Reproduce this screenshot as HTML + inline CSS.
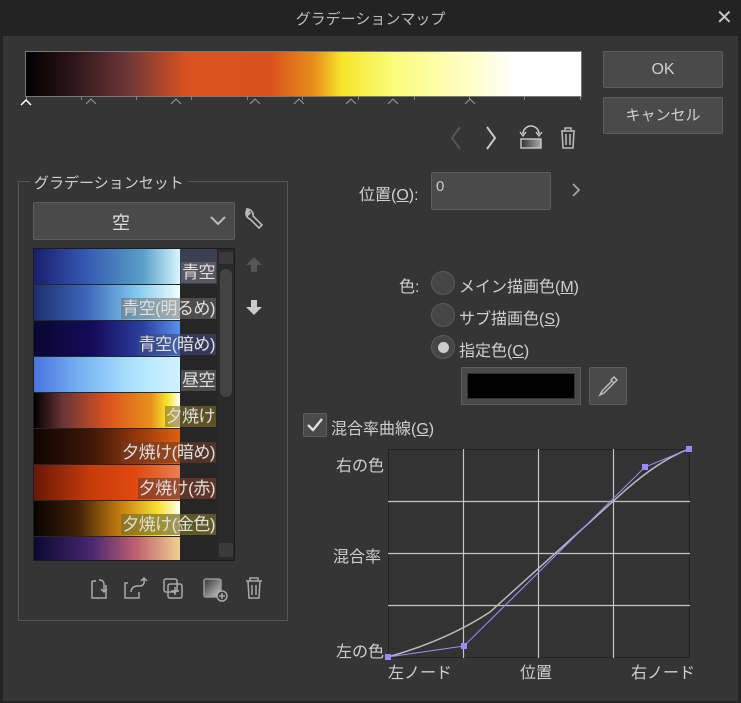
<!DOCTYPE html>
<html><head><meta charset="utf-8"><style>
*{box-sizing:border-box;margin:0;padding:0}
body{width:741px;height:703px;background:#232323;font-family:"Liberation Sans","Noto Sans CJK JP",sans-serif;color:#c8c8c8;position:relative;overflow:hidden}
.a{position:absolute}
.btn{position:absolute;background:#4a4a4a;border:1px solid #5e5e5e;border-radius:2px;color:#cfcfcf;font-size:16px;text-align:center}
.row{position:absolute;left:0;width:183px;height:35px}
.row .g{position:absolute;left:0;top:0;width:146px;height:35px}
.row .l{position:absolute;right:1px;bottom:1px;font-size:17px;color:#e0e0e0;padding:0 1px;background:rgba(110,110,110,.55);line-height:21px;letter-spacing:-0.5px}
.lbl{position:absolute;font-size:16px;color:#cfcfcf}
.radio{position:absolute;width:24px;height:24px;border-radius:50%;background:#464646;border:1px solid #5a5a5a}
</style></head><body>
<div class="a" style="left:0;top:0;width:741px;height:36px;background:#232323"></div>
<div class="a" style="left:0;top:8px;width:741px;text-align:center;font-size:15px;color:#bdbdbd">グラデーションマップ</div>
<div class="a" style="left:716px;top:5px;font-size:20px;color:#c8c8c8">✕</div>
<div class="a" style="left:3px;top:36px;width:735px;height:665px;background:#353535"></div>

<div class="a" style="left:25px;top:51px;width:557px;height:46px;border:1px solid #777;background:linear-gradient(to right,#000 0%,#2a1418 8%,#6b3538 18%,#d95220 29%,#d9521e 44%,#e8901a 52%,#f6e62a 57%,#fafc7a 66%,#ffffc8 80%,#fff 88%,#fff 100%)"></div>
<svg class="a" style="left:0;top:94px" width="600" height="14">
<g stroke="#888" stroke-width="1" fill="none">
<line x1="26.5" y1="2" x2="26.5" y2="6"/><line x1="81.5" y1="2" x2="81.5" y2="6"/><line x1="136.5" y1="2" x2="136.5" y2="6"/><line x1="191.5" y1="2" x2="191.5" y2="6"/><line x1="247.5" y1="2" x2="247.5" y2="6"/><line x1="302.5" y1="2" x2="302.5" y2="6"/><line x1="358.5" y1="2" x2="358.5" y2="6"/><line x1="414.5" y1="2" x2="414.5" y2="6"/><line x1="469.5" y1="2" x2="469.5" y2="6"/><line x1="524.5" y1="2" x2="524.5" y2="6"/><line x1="580.5" y1="2" x2="580.5" y2="6"/>
<path d="M86 10l5-5 5 5M171 10l5-5 5 5M250 10l5-5 5 5M294 10l5-5 5 5M346 10l5-5 5 5M388 10l5-5 5 5M465 10l5-5 5 5" stroke="#9a9a9a"/>
<path d="M21 11l5-5 5 5" stroke="#fff" stroke-width="1.5"/>
</g></svg>

<div class="btn" style="left:603px;top:51px;width:120px;height:37px;line-height:35px">OK</div>
<div class="btn" style="left:603px;top:97px;width:120px;height:37px;line-height:35px;font-size:15px">キャンセル</div>

<svg class="a" style="left:440px;top:122px" width="150" height="32" fill="none" stroke-width="2">
<path d="M20 5l-8 11 8 11" stroke="#555"/>
<path d="M47 5l8 11-8 11" stroke="#c8c8c8"/>
<path d="M83 12a8 8 0 0 1 16 0" stroke="#c8c8c8" stroke-width="1.6"/>
<path d="M80 10l3 4 3-4M96 10l3 4 3-4" stroke="#c8c8c8" stroke-width="1.4"/>
<rect x="81" y="17" width="20" height="9" fill="url(#gg)" stroke="#c8c8c8" stroke-width="1.4"/>
<defs><linearGradient id="gg"><stop offset="0" stop-color="#333"/><stop offset="1" stop-color="#aaa"/></linearGradient></defs>
<path d="M121 9h14M125 9V6h6v3M122 9l1 17h10l1-17M126 12v11M130 12v11" stroke="#bbb" stroke-width="1.5"/>
</svg>

<div class="a" style="left:18px;top:181px;width:270px;height:440px;border:1px solid #555"></div>
<div class="a" style="left:30px;top:172px;padding:0 4px;background:#353535;font-size:15px;color:#cfcfcf">グラデーションセット</div>
<div class="a" style="left:33px;top:202px;width:202px;height:38px;background:#4a4a4a;border:1px solid #5e5e5e;border-radius:2px"></div>
<div class="a" style="left:112px;top:209px;font-size:18px;color:#ddd">空</div>
<svg class="a" style="left:208px;top:212px" width="20" height="16"><path d="M3 5l7 7 7-7" stroke="#bbb" stroke-width="2" fill="none"/></svg>
<svg class="a" style="left:242px;top:207px" width="24" height="26"><path d="M5 3a6 6 0 0 0 3 9l9 9 3-3-9-9a6 6 0 0 0-6-7l3 4-2 2z" stroke="#bbb" stroke-width="1.6" fill="none"/></svg>

<div class="a" style="left:33px;top:248px;width:202px;height:313px;background:#262626;border:1px solid #1c1c1c;overflow:hidden">
<div class="row" style="top:0;background:#3c3f52"><div class="g" style="background:linear-gradient(to right,#1a1f6e,#3457b0 35%,#5aa0c8 75%,#d8f6ff)"></div><div class="l">青空</div></div>
<div class="row" style="top:36px;background:#262626"><div class="g" style="background:linear-gradient(to right,#1c2f70,#3c64b8 35%,#80c8ee 70%,#f0ffff)"></div><div class="l">青空(明るめ)</div></div>
<div class="row" style="top:72px"><div class="g" style="background:linear-gradient(to right,#0a0830,#140a5a 40%,#2c40a0 75%,#5890ee)"></div><div class="l" style="background:rgba(60,70,120,.6)">青空(暗め)</div></div>
<div class="row" style="top:108px"><div class="g" style="background:linear-gradient(to right,#4a74e0,#7ab8f4 35%,#b0e4ff 70%,#d0f2ff)"></div><div class="l">昼空</div></div>
<div class="row" style="top:144px"><div class="g" style="background:linear-gradient(to right,#000,#6b3538 20%,#d9521e 50%,#e8901a 80%,#f8e830 92%,#fff)"></div><div class="l" style="background:rgba(130,110,40,.6)">夕焼け</div></div>
<div class="row" style="top:180px"><div class="g" style="background:linear-gradient(to right,#100400,#401808 40%,#a03c0c 75%,#e06010)"></div><div class="l" style="background:rgba(110,60,40,.6)">夕焼け(暗め)</div></div>
<div class="row" style="top:216px"><div class="g" style="background:linear-gradient(to right,#6a1808,#c83c0a 40%,#e04a10 70%,#e88050)"></div><div class="l" style="background:rgba(120,60,40,.7)">夕焼け(赤)</div></div>
<div class="row" style="top:252px"><div class="g" style="background:linear-gradient(to right,#080400,#402008 30%,#c88010 60%,#f8e030 85%,#fffff0)"></div><div class="l" style="background:rgba(120,110,40,.7)">夕焼け(金色)</div></div>
<div class="row" style="top:288px"><div class="g" style="background:linear-gradient(to right,#0a0830,#4a2870 40%,#c06070 70%,#f0d090)"></div><div class="l" style="bottom:-12px;background:rgba(120,80,80,.6)">夕焼け(紫)</div></div>
<div class="a" style="left:183px;top:0;width:18px;height:311px;background:#2a2a2a"></div>
<div class="a" style="left:185px;top:3px;width:14px;height:12px;background:#3a3a3a"></div>
<div class="a" style="left:186px;top:20px;width:12px;height:128px;background:#444;border-radius:6px"></div>
<div class="a" style="left:185px;top:294px;width:14px;height:14px;background:#3a3a3a"></div>
</div>
<svg class="a" style="left:243px;top:255px" width="22" height="62"><path d="M11 2l-8 8h5v7h6v-7h5z" fill="#555"/><path d="M11 60l-8-8h5v-7h6v7h5z" fill="#ccc"/></svg>

<svg class="a" style="left:88px;top:575px" width="180" height="28" fill="none" stroke="#aaa" stroke-width="1.5">
<path d="M4 6h4M4 6v17h14V10M11 5a5 5 0 0 1 0 0h1a4 4 0 0 1 4 4v7M13 14l3 3 3-3"/>
<path d="M40 8h-3v15h14v-6M43 17a6 6 0 0 1 6-6h3a4 4 0 0 0 4-5V3M53 6l3-3 3 3"/>
<rect x="76" y="4" width="13" height="13" rx="2"/><rect x="80" y="9" width="14" height="14" rx="2"/><path d="M87 12v8M83 16h8"/>
<rect x="116" y="4" width="17" height="18" rx="2" fill="url(#g2)" stroke="#999"/>
<defs><linearGradient id="g2" x1="0" y1="0" x2="1" y2="1"><stop offset="0" stop-color="#333"/><stop offset="1" stop-color="#ccc"/></linearGradient></defs>
<circle cx="134" cy="21" r="5" fill="#353535"/><path d="M134 18v6M131 21h6"/>
<path d="M158 6h16M162 6V3h8v3M160 6l1 17h10l1-17M164 10v10M168 10v10"/>
</svg>

<div class="lbl" style="left:359px;top:181px">位置(<u>O</u>):</div>
<div class="a" style="left:431px;top:172px;width:120px;height:38px;background:#4a4a4a;border:1px solid #5e5e5e;border-radius:2px"></div>
<div class="a" style="left:436px;top:178px;font-size:15px;color:#ccc">0</div>
<svg class="a" style="left:570px;top:182px" width="12" height="16"><path d="M3 2l6 6-6 6" stroke="#aaa" stroke-width="1.6" fill="none"/></svg>

<div class="lbl" style="left:399px;top:273px">色:</div>
<div class="radio" style="left:431px;top:271px"></div><div class="lbl" style="left:459px;top:273px">メイン描画色(<u>M</u>)</div>
<div class="radio" style="left:431px;top:303px"></div><div class="lbl" style="left:459px;top:305px">サブ描画色(<u>S</u>)</div>
<div class="radio" style="left:431px;top:335px"></div><div class="a" style="left:438px;top:342px;width:11px;height:11px;border-radius:50%;background:#ccc"></div><div class="lbl" style="left:459px;top:337px">指定色(<u>C</u>)</div>
<div class="a" style="left:461px;top:367px;width:120px;height:38px;background:#4a4a4a;border:1px solid #5e5e5e"></div>
<div class="a" style="left:467px;top:373px;width:108px;height:26px;background:#000;border:1px solid #333"></div>
<div class="a" style="left:589px;top:367px;width:38px;height:38px;background:#4a4a4a;border:1px solid #5e5e5e;border-radius:2px"></div>
<svg class="a" style="left:594px;top:372px" width="28" height="28"><path d="M20 5l3 3-3 3-3-3zM18 9l-10 10-2 4 4-2 10-10" stroke="#bbb" stroke-width="1.5" fill="none"/></svg>

<div class="a" style="left:303px;top:413px;width:24px;height:24px;background:#4a4a4a;border:1px solid #5e5e5e;border-radius:2px"></div>
<svg class="a" style="left:303px;top:413px" width="24" height="24"><path d="M5 12l5 5 9-11" stroke="#ddd" stroke-width="2.4" fill="none"/></svg>
<div class="lbl" style="left:331px;top:415px">混合率曲線(<u>G</u>)</div>

<div class="lbl" style="left:336px;top:452px">右の色</div>
<div class="lbl" style="left:333px;top:543px">混合率</div>
<div class="lbl" style="left:336px;top:638px">左の色</div>
<div class="lbl" style="left:388px;top:659px">左ノード</div>
<div class="lbl" style="left:520px;top:659px">位置</div>
<div class="lbl" style="left:631px;top:659px">右ノード</div>
<svg class="a" style="left:380px;top:440px" width="320" height="225">
<rect x="8.5" y="9.5" width="301" height="208" fill="#333" stroke="#222"/>
<g stroke="#c4c4c4" stroke-width="1.2">
<line x1="83.5" y1="9" x2="83.5" y2="218"/><line x1="158.5" y1="9" x2="158.5" y2="218"/><line x1="233.5" y1="9" x2="233.5" y2="218"/>
<line x1="8" y1="61.5" x2="310" y2="61.5"/><line x1="8" y1="113.5" x2="310" y2="113.5"/><line x1="8" y1="165.5" x2="310" y2="165.5"/>
</g>
<path d="M8 217C40 208 75 195 110 172L240 55C262 35 285 18 309 9" stroke="#bbb" stroke-width="1.5" fill="none"/>
<path d="M8 217L84 206L265 27L309 9" stroke="#9a8cff" stroke-width="1" fill="none"/>
<g fill="#9a8cff"><rect x="5" y="214" width="6" height="6"/><rect x="81" y="203" width="6" height="6"/><rect x="262" y="24" width="6" height="6"/><rect x="306" y="6" width="6" height="6"/></g>
</svg>
</body></html>
